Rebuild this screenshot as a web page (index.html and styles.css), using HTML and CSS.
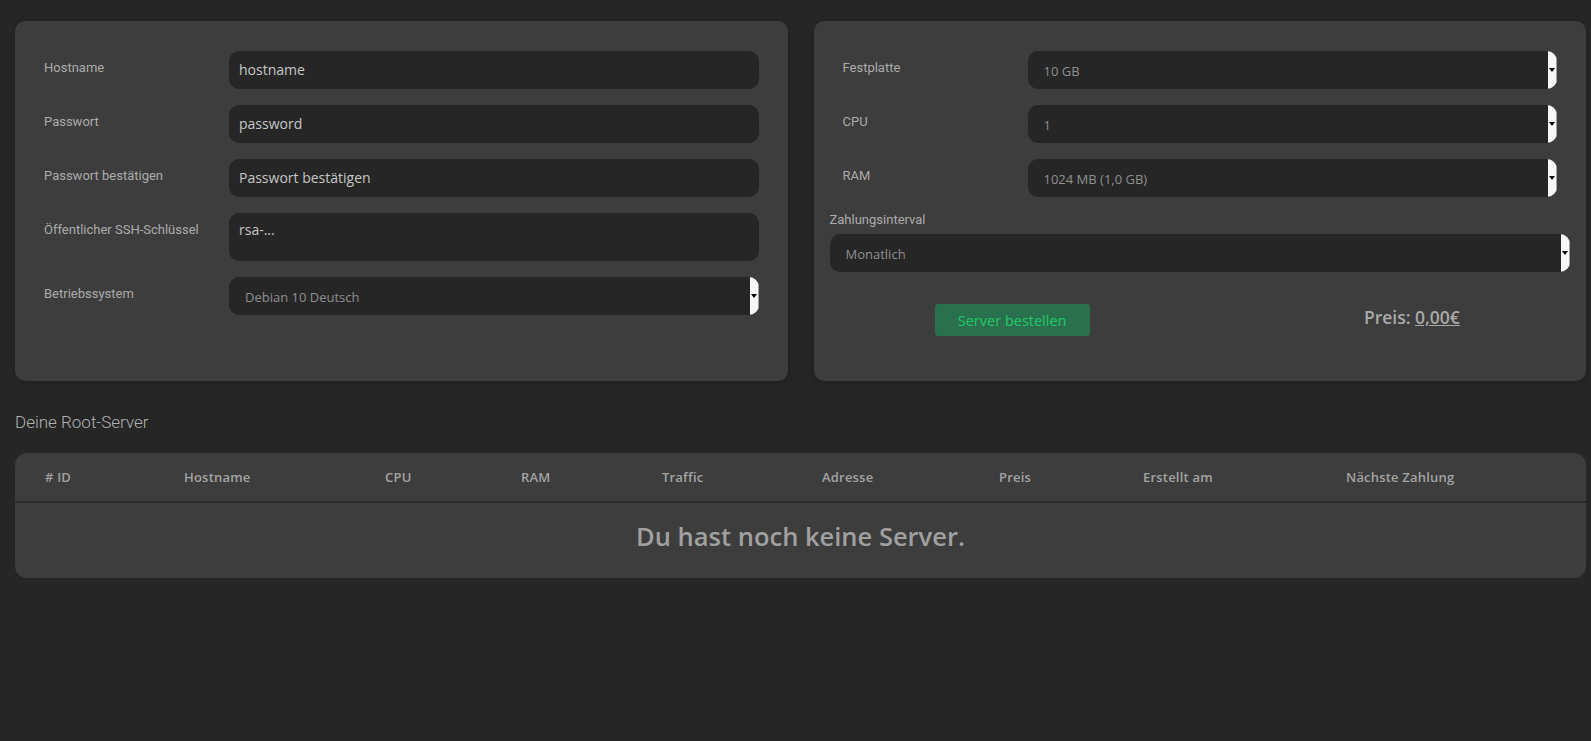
FILE: index.html
```html
<!DOCTYPE html>
<html lang="de">
<head>
<meta charset="utf-8">
<title>Root-Server</title>
<link rel="stylesheet" href="styles.css">
</head>
<body>
<div class="page">
  <div class="top">
    <section class="card card-left">
      <div class="row">
        <label class="lbl">Hostname</label>
        <div class="field">hostname</div>
      </div>
      <div class="row">
        <label class="lbl">Passwort</label>
        <div class="field">password</div>
      </div>
      <div class="row">
        <label class="lbl">Passwort bestätigen</label>
        <div class="field">Passwort bestätigen</div>
      </div>
      <div class="row">
        <label class="lbl">Öffentlicher SSH-Schlüssel</label>
        <div class="field area">rsa-...</div>
      </div>
      <div class="row">
        <label class="lbl">Betriebssystem</label>
        <div class="select"><span class="sel-text">Debian 10 Deutsch</span><span class="sel-btn"></span></div>
      </div>
    </section>
    <section class="card card-right">
      <div class="row inset">
        <label class="lbl">Festplatte</label>
        <div class="select"><span class="sel-text">10 GB</span><span class="sel-btn"></span></div>
      </div>
      <div class="row inset">
        <label class="lbl">CPU</label>
        <div class="select"><span class="sel-text">1</span><span class="sel-btn"></span></div>
      </div>
      <div class="row inset">
        <label class="lbl">RAM</label>
        <div class="select"><span class="sel-text">1024 MB (1,0 GB)</span><span class="sel-btn"></span></div>
      </div>
      <div class="stack">
        <label class="lbl lbl-top">Zahlungsinterval</label>
        <div class="select"><span class="sel-text">Monatlich</span><span class="sel-btn"></span></div>
      </div>
      <div class="actions">
        <div class="act-col"><button class="btn-order">Server bestellen</button></div>
        <div class="act-col price-col"><span class="price">Preis: <u>0,00€</u></span></div>
      </div>
    </section>
  </div>

  <h2 class="title">Deine Root-Server</h2>

  <div class="table">
    <div class="thead">
      <div>#&nbsp;ID</div>
      <div>Hostname</div>
      <div>CPU</div>
      <div>RAM</div>
      <div>Traffic</div>
      <div>Adresse</div>
      <div>Preis</div>
      <div>Erstellt am</div>
      <div>Nächste Zahlung</div>
    </div>
    <div class="tbody">Du hast noch keine Server.</div>
  </div>
</div>
</body>
</html>
```

FILE: styles.css
```css
html, body {
  margin: 0;
  padding: 0;
  background: #262626;
}
body {
  font-family: "Open Sans", "Noto Sans", sans-serif;
  color: #aaaaaa;
}
.page {
  padding: 21px 5px 0 15px;
}
.top {
  display: grid;
  grid-template-columns: 1fr 1fr;
  gap: 26px;
  align-items: stretch;
}
.card {
  min-width: 0;
  background: #3d3d3d;
  border-radius: 10px;
  box-shadow: 0 1px 4px rgba(0,0,0,0.25);
}
.card-left {
  padding: 30px 29px 30px 29px;
}
.card-right {
  padding: 30px 16px 45px 16px;
}
.row {
  display: grid;
  grid-template-columns: 185px 1fr;
  margin-bottom: 16px;
}
.row.inset {
  padding: 0 13px;
}
.lbl {
  font-family: Roboto, "Liberation Sans", sans-serif;
  font-size: 13px;
  line-height: 20px;
  color: #ababab;
  padding-top: 7px;
}
.field {
  height: 38px;
  box-sizing: border-box;
  background: #262626;
  border-radius: 10px;
  padding: 0 10px;
  font-size: 14px;
  line-height: 38px;
  color: #c6c6c6;
}
.field.area {
  height: 48px;
  line-height: 20px;
  padding-top: 7px;
}
.select {
  display: flex;
  height: 38px;
  background: #262626;
  border-radius: 10px;
  overflow: hidden;
}
.sel-text {
  flex: 1;
  padding-left: 16px;
  font-size: 13px;
  line-height: 40px;
  color: #8f8f8f;
}
.sel-btn {
  width: 9px;
  background: #f7f7f7;
  box-shadow: inset -1px -1px 0 #a0a0a0;
  display: flex;
  align-items: center;
  justify-content: center;
}
.sel-btn::after {
  content: "";
  width: 0;
  height: 0;
  border-left: 3px solid transparent;
  border-right: 3px solid transparent;
  border-top: 4px solid #000;
  margin-right: 1px;
}
.stack {
  margin-top: -3px;
}
.lbl-top {
  display: block;
  padding-top: 0;
  margin-bottom: 4px;
}
.actions {
  display: grid;
  grid-template-columns: 1fr 1fr;
  margin-top: 32px;
}
.act-col {
  display: flex;
  justify-content: center;
}
.price-col {
  padding-left: 54px;
  padding-top: 1px;
}
.btn-order {
  width: 155px;
  height: 32px;
  border: none;
  border-radius: 3px;
  background: #2b704e;
  color: #20c86b;
  font-family: "Open Sans", "Noto Sans", sans-serif;
  font-size: 14.5px;
  padding: 0;
  margin-left: -5px;
}
.price {
  font-size: 17.5px;
  font-weight: 600;
  color: #a9a9a9;
  line-height: 24px;
}
.title {
  margin: 29px 0 19px 0;
  font-family: Roboto, "Liberation Sans", sans-serif;
  font-weight: 300;
  font-size: 17px;
  line-height: 24px;
  color: #b0b0b0;
}
.table {
  background: #3d3d3d;
  border-radius: 12px;
  overflow: hidden;
}
.thead {
  display: grid;
  grid-template-columns: 139px 201px 136px 141px 160px 177px 144px 203px 1fr;
  padding-left: 30px;
  height: 48px;
  align-items: center;
  border-bottom: 2px solid #2a2a2a;
  font-size: 13px;
  font-weight: 600;
  letter-spacing: 0.2px;
  color: #a3a3a3;
}
.tbody {
  height: 75px;
  line-height: 67px;
  text-align: center;
  font-size: 25.5px;
  font-weight: 600;
  color: #a0a0a0;
}
```
